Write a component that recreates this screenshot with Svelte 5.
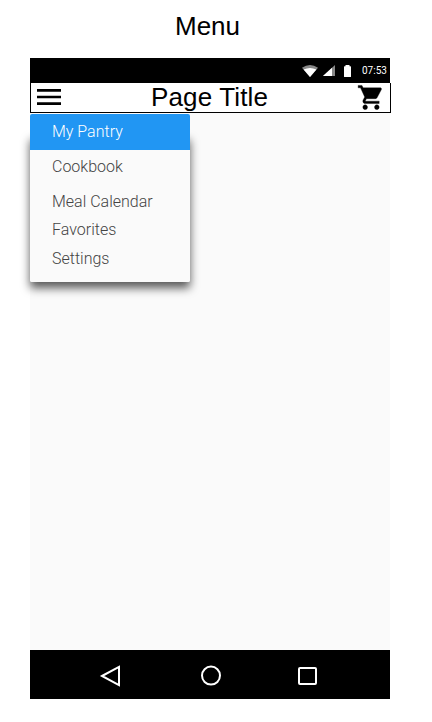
<script>
  const items = [
    { label: 'My Pantry', height: 36, active: true },
    { label: 'Cookbook', height: 34 },
    { label: 'Meal Calendar', height: 36 },
    { label: 'Favorites', height: 20 },
    { label: 'Settings', height: 38 }
  ];
</script>

<main>
  <h1>Menu</h1>
  <section class="phone">
    <div class="status">
      <svg class="wifi" width="16" height="12" viewBox="0 0 16 12">
        <path d="M0 2.8Q8-2.8 16 2.8L8 12Z" fill="#888" />
        <path d="M1.6 4.6Q8 1.2 14.4 4.6L8 12Z" fill="#fff" />
      </svg>
      <svg class="signal" width="12" height="11" viewBox="0 0 12 11">
        <path d="M0 11L12 0V11Z" fill="#888" />
        <path d="M0 11L9 2.75V11Z" fill="#fff" />
      </svg>
      <svg class="battery" width="7" height="12" viewBox="0 0 7 12">
        <path d="M1.5 0H5.5V1.2H6.4Q7 1.2 7 1.8V11.4Q7 12 6.4 12H.6Q0 12 0 11.4V1.8Q0 1.2.6 1.2H1.5Z" fill="#fff" />
      </svg>
      <span class="time">07:53</span>
    </div>
    <header>
      <svg class="burger" width="24" height="16" viewBox="3 6 18 12">
        <path d="M3 18h18v-2H3v2zm0-5h18v-2H3v2zm0-7v2h18V6H3z" />
      </svg>
      <h2>Page Title</h2>
      <svg class="cart" width="28" height="29" viewBox="0 0 24 24" preserveAspectRatio="none">
        <path d="M7 18c-1.1 0-1.99.9-1.99 2S5.9 22 7 22s2-.9 2-2-.9-2-2-2zM1 2v2h2l3.6 7.59-1.35 2.45c-.16.28-.25.61-.25.96 0 1.1.9 2 2 2h12v-2H7.42c-.14 0-.25-.11-.25-.25l.03-.12.9-1.63h7.45c.75 0 1.41-.41 1.75-1.03l3.58-6.49c.08-.14.12-.31.12-.48 0-.55-.45-1-1-1H5.21l-.94-2H1zm16 16c-1.1 0-1.99.9-1.99 2s.89 2 1.99 2 2-.9 2-2-.9-2-2-2z" />
      </svg>
    </header>
    <div class="content">
      <nav class="menu">
        {#each items as item}
          <div class="item" class:active={item.active} style="height: {item.height}px">{item.label}</div>
        {/each}
      </nav>
    </div>
    <footer>
      <svg width="22" height="22" viewBox="0 0 22 22"><path d="M3 11L20 1.9V20.1Z" /></svg>
      <svg width="22" height="22" viewBox="0 0 22 22"><circle cx="11" cy="10.6" r="9" /></svg>
      <svg width="22" height="22" viewBox="0 0 22 22"><rect x="3" y="3" width="17" height="16" rx="1" /></svg>
    </footer>
  </section>
</main>

<style>
  :global(body) { background: #fff; }
  main {
    width: 432px;
    height: 722px;
    overflow: hidden;
    font-family: "Liberation Sans", Arial, sans-serif;
    color: #000;
  }
  h1, h2 { margin: 0; font-size: 26px; font-weight: 400; line-height: 30px; white-space: nowrap; }
  h1 { height: 47px; padding: 11px 0 0 175px; }
  .phone { width: 360px; height: 641px; margin-left: 30px; display: flex; flex-direction: column; }
  .status {
    height: 25px;
    box-sizing: border-box;
    padding: 0 3px 0 272px;
    display: flex;
    align-items: center;
    background: #000;
    color: #fff;
    flex: none;
  }
  .wifi { margin-right: 5px; }
  .signal { margin-right: 9px; }
  .battery { margin-right: 11px; }
  .time { font: 400 10px/12px Roboto, sans-serif; white-space: nowrap; }
  header {
    width: 361px;
    height: 30px;
    box-sizing: border-box;
    border: 1px solid #000;
    border-top: 0;
    background: #fff;
    display: flex;
    align-items: flex-start;
    flex: none;
  }
  .burger { margin: 6px 0 0 6px; }
  h2 { width: 118px; margin: -1px 0 0 90px; letter-spacing: 0.15px; }
  .cart { margin: -0.5px 0 0 88px; stroke: #000; stroke-width: 0.3; }
  .content { flex: 1; padding-top: 1px; background: #fafafa; }
  .menu {
    position: relative;
    isolation: isolate;
    width: 160px;
    height: 168px;
    border-radius: 2px;
  }
  .menu::before, .menu::after {
    content: "";
    position: absolute;
    z-index: -2;
    inset: 20px 0 0;
    border-radius: 2px;
    box-shadow: 0 6px 10px rgba(0, 0, 0, 0.65);
  }
  .menu::after {
    z-index: -1;
    inset: 0;
    background: #fafafa;
    box-shadow: none;
  }
  .item {
    box-sizing: border-box;
    padding-left: 22px;
    display: flex;
    align-items: center;
    font: 300 16px/20px Roboto, sans-serif;
    color: #444;
  }
  .active { background: #2196f3; color: #fff; border-radius: 2px 2px 0 0; }
  footer {
    height: 49px;
    box-sizing: border-box;
    padding: 15px 0 0 69px;
    display: flex;
    background: #000;
    flex: none;
  }
  footer svg { fill: none; stroke: #fff; stroke-width: 2; }
  footer svg:nth-child(2) { margin: 0 74px 0 79px; }
</style>
